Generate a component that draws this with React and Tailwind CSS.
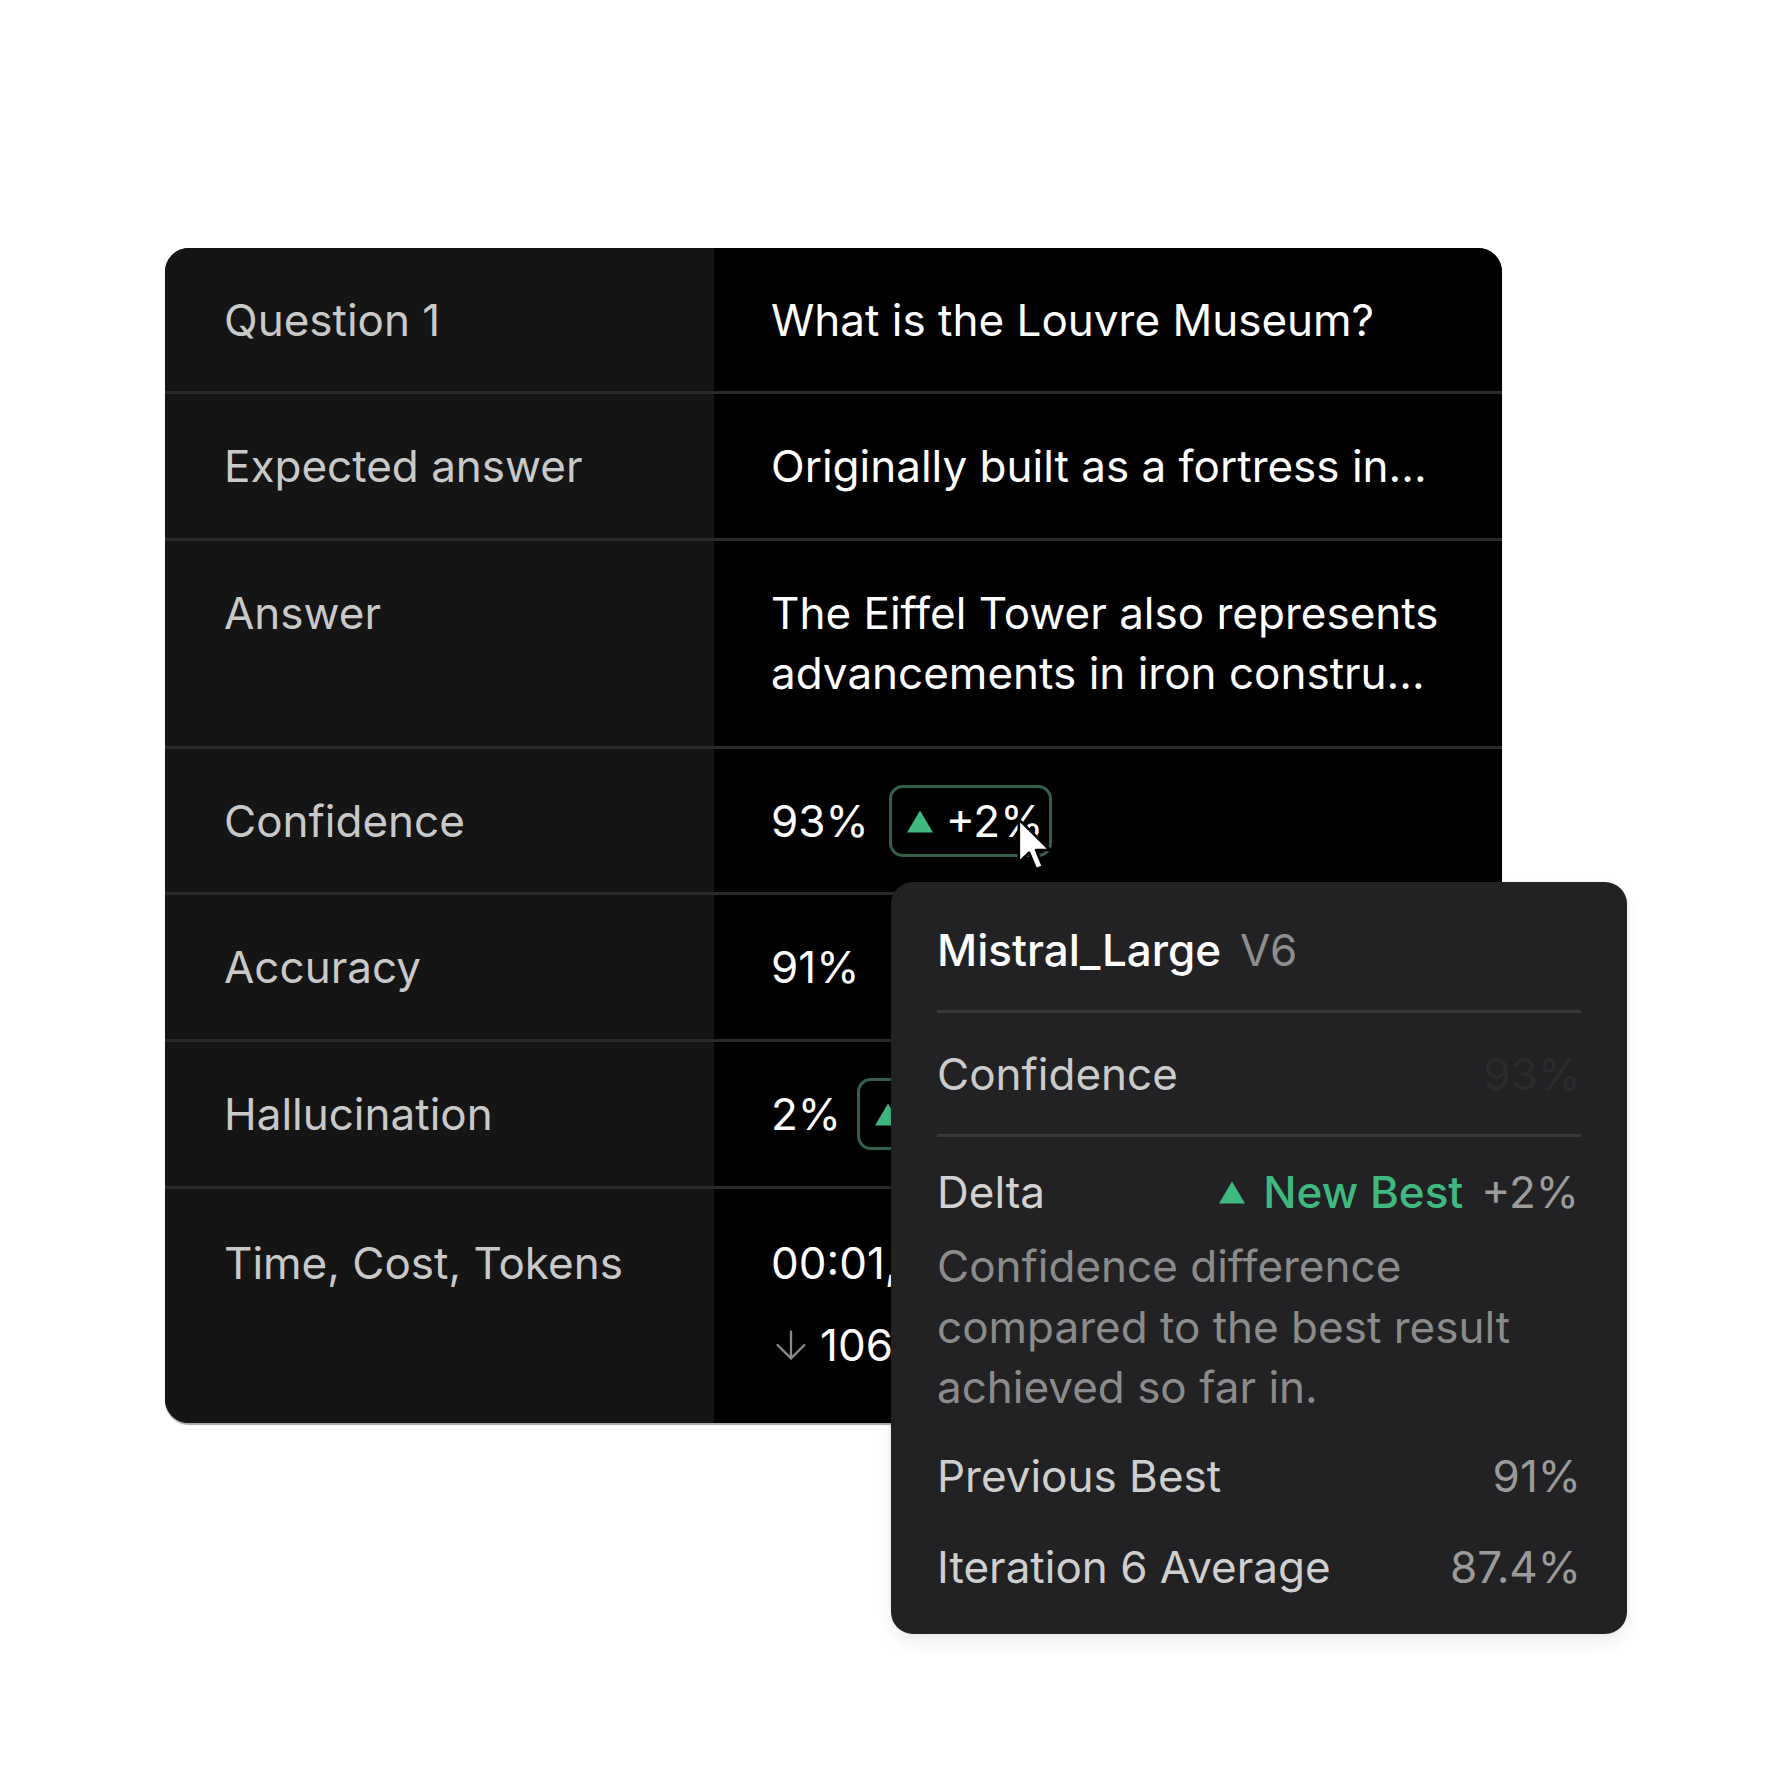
import React from 'react';
import { ArrowDown } from 'lucide-react';

const rows = [
  { label: 'Question 1', h: 'h-[146px]', value: <span>What is the Louvre Museum?</span> },
  { label: 'Expected answer', h: 'h-[147px]', value: <span>Originally built as a fortress in...</span> },
  {
    label: 'Answer',
    h: 'h-[208px]',
    value: (
      <span>
        The Eiffel Tower also represents
        <br />
        advancements in iron constru...
      </span>
    )
  },
  { label: 'Confidence', h: 'h-[146px]', value: 'confidence' },
  { label: 'Accuracy', h: 'h-[147px]', value: <span>91%</span> },
  { label: 'Hallucination', h: 'h-[147px]', value: 'hallucination' },
  { label: 'Time, Cost, Tokens', h: 'h-[234px]', value: 'usage', last: true }
];

function Triangle({ className }) {
  return (
    <svg viewBox="0 0 26 22" className={className}>
      <path d="M13 0 L26 22 L0 22 Z" fill="#3fb97f" />
    </svg>
  );
}

function DeltaBadge({ text }) {
  return (
    <div className="flex items-center h-[72px] pl-[15px] pr-[6px] gap-[13px] border-[3px] border-[#345f48] rounded-[14px]">
      <Triangle className="w-[26px] h-[23px]" />
      <span className="text-white">{text}</span>
    </div>
  );
}

function Cursor() {
  return (
    <svg viewBox="0 0 13 21" className="w-[34px] h-[58px]">
      <path
        d="M0.7 0.7 L0.7 17.2 L4.6 13.4 L7.3 19.8 L9.9 18.7 L7.3 12.4 L12.6 12.4 Z"
        fill="#ffffff"
        stroke="#000000"
        strokeWidth="1"
        strokeLinejoin="round"
      />
    </svg>
  );
}

function Value({ value }) {
  if (value === 'confidence') {
    return (
      <div className="flex items-center gap-[20px] -mt-[6px]">
        <span>93%</span>
        <DeltaBadge text="+2%" />
      </div>
    );
  }
  if (value === 'hallucination') {
    return (
      <div className="flex items-center gap-[16px] -mt-[6px]">
        <span>2%</span>
        <DeltaBadge text="-1%" />
      </div>
    );
  }
  if (value === 'usage') {
    return (
      <div className="flex flex-col gap-[22px] whitespace-nowrap">
        <span>00:01, $0.0021, 1,204</span>
        <div className="flex items-center gap-[6px] -ml-[3px]">
          <ArrowDown size={46} strokeWidth={1.2} color="#8a8a8a" />
          <span>1068</span>
        </div>
      </div>
    );
  }
  return value;
}

export default function App() {
  return (
    <div
      className="min-h-[1792px] bg-white pt-[248px] pl-[165px]"
      style={{ fontFamily: 'Inter, "Noto Sans", sans-serif' }}
    >
      <div className="relative w-[1337px]">
        {/* Table card */}
        <div className="rounded-[24px] overflow-hidden bg-black shadow-[0_2px_1px_rgba(0,0,0,0.35)] text-[44px] leading-[60px]">
          {rows.map((row) => (
            <div
              key={row.label}
              className={`flex ${row.h} ${row.last ? '' : 'border-b-[3px] border-[#2a2a2a]'}`}
            >
              <div className={`w-[549px] shrink-0 bg-[#151515] pl-[59px] text-[#c9c9c9] ${row.last ? 'pt-[44px]' : 'pt-[42px]'}`}>
                {row.label}
              </div>
              <div className={`flex-1 bg-black pl-[57px] text-white ${row.last ? 'pt-[44px]' : 'pt-[42px]'}`}>
                <Value value={row.value} />
              </div>
            </div>
          ))}
        </div>

        {/* Cursor over the badge */}
        <div className="absolute left-[852px] top-[568px] z-20">
          <Cursor />
        </div>

        {/* Tooltip popover */}
        <div className="absolute left-[726px] top-[634px] z-10 w-[736px] rounded-[22px] bg-[#222224] px-[46px] pt-[38px] pb-[37px] text-[44px] leading-[60px] shadow-[0_0_5px_rgba(0,0,0,0.07),0_10px_16px_rgba(0,0,0,0.06)]">
          <div className="flex items-center gap-[19px] pb-[30px] border-b-[3px] border-[#39393b]">
            <span className="text-white font-medium">Mistral_Large</span>
            <span className="text-[#8e8e8e]">V6</span>
          </div>

          <div className="flex justify-between pt-[31px] pb-[30px] border-b-[3px] border-[#39393b]">
            <span className="text-[#cbcbcb]">Confidence</span>
            <span className="text-[#2b2b2d]">93%</span>
          </div>

          <div className="flex justify-between items-center pt-[25px]">
            <span className="text-[#d2d2d2]">Delta</span>
            <div className="flex items-center">
              <Triangle className="w-[26px] h-[23px] mr-[18px]" />
              <span className="text-[#3fb97f] font-medium">New Best</span>
              <span className="text-[#9c9c9c] ml-[18px] mr-[2px]">+2%</span>
            </div>
          </div>

          <p className="mt-[14px] text-[#8b8b8b] leading-[60.5px]">
            Confidence difference
            <br />
            compared to the best result
            <br />
            achieved so far in.
          </p>

          <div className="flex justify-between mt-[28px]">
            <span className="text-[#cfcfcf]">Previous Best</span>
            <span className="text-[#9a9a9a]">91%</span>
          </div>

          <div className="flex justify-between mt-[31px]">
            <span className="text-[#cfcfcf]">Iteration 6 Average</span>
            <span className="text-[#9a9a9a]">87.4%</span>
          </div>
        </div>
      </div>
    </div>
  );
}
